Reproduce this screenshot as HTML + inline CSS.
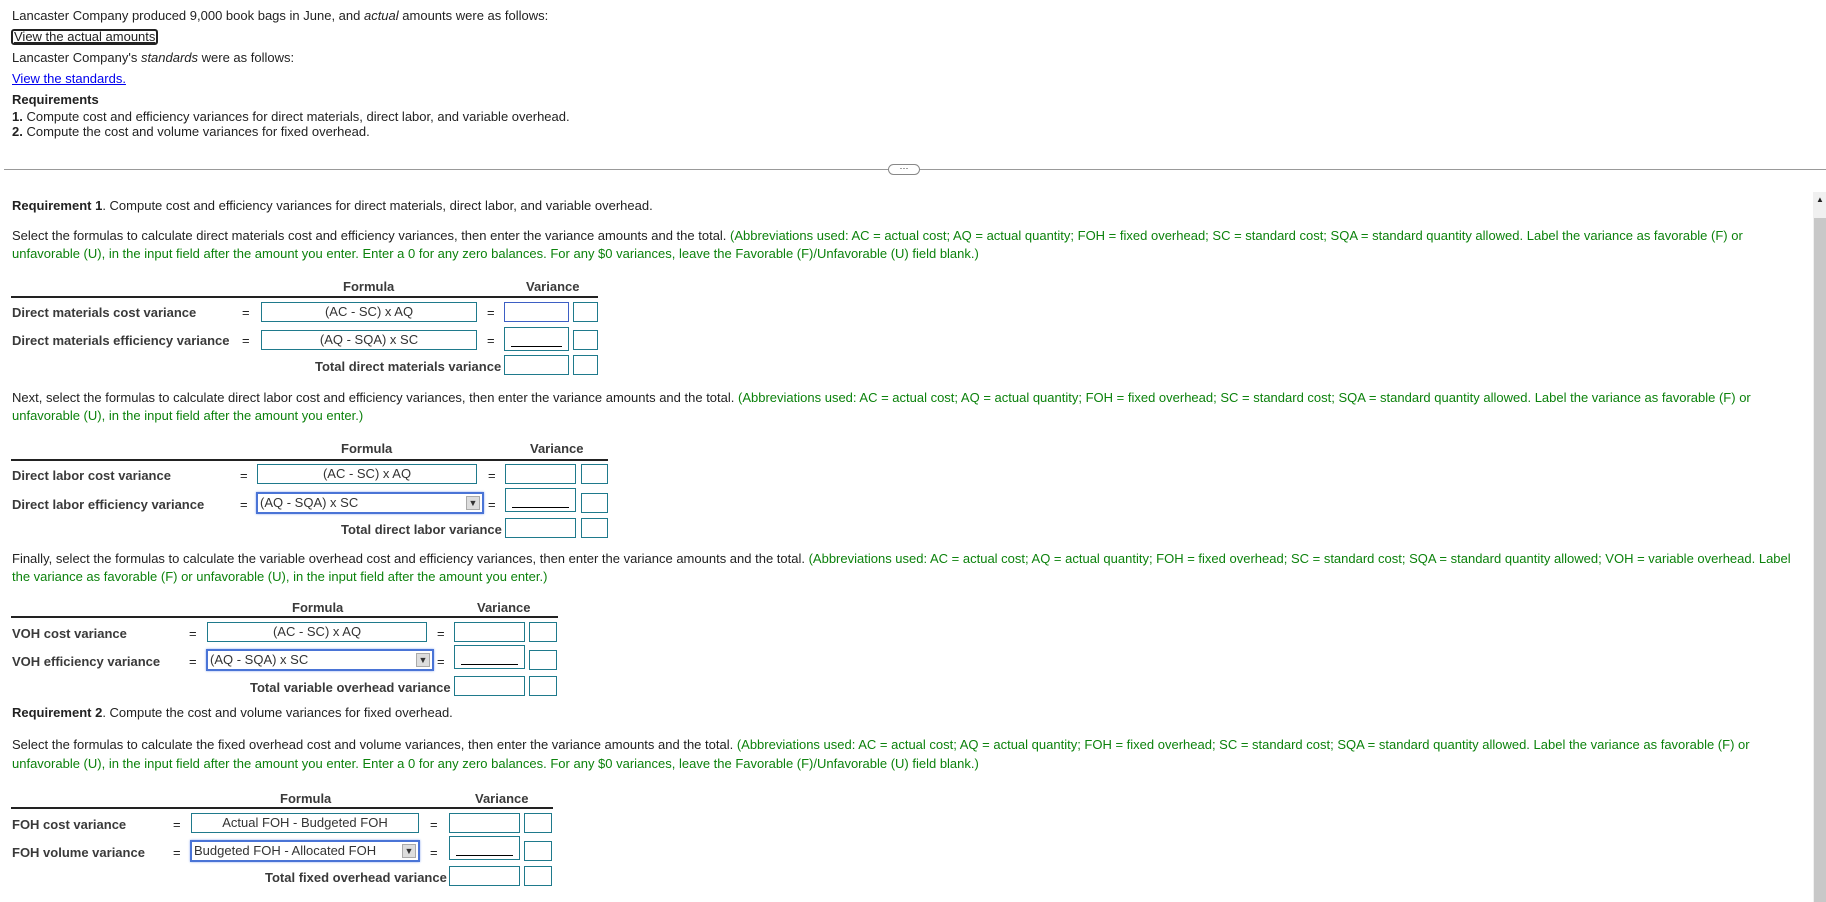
<!DOCTYPE html>
<html><head><meta charset="utf-8"><style>
*{margin:0;padding:0;box-sizing:border-box}
body{width:1826px;height:902px;overflow:hidden;background:#fff;font-family:"Liberation Sans",Arial,sans-serif;font-size:13px;color:#222;position:relative}
.a{position:absolute;white-space:nowrap;line-height:16px}
.g{color:#0c820c}
.lb{font-weight:bold;color:#3a3a3a}
.box{position:absolute;border:1px solid #1f7a8c;height:20px;background:#fff;text-align:center;line-height:18px;color:#333}
.sel{position:absolute;border:2px solid #4a74d6;height:22px;background:#fff;line-height:18px;color:#333;padding-left:2px;box-shadow:0 0 2px #8aa8ee}
.arr{position:absolute;right:2px;top:2px;width:14px;height:14px;background:#ddd;border:1px solid #aaa;font-size:9px;line-height:12px;text-align:center}
.ul{position:absolute;left:6px;right:6px;bottom:3px;border-bottom:1px solid #000}
.hl{position:absolute;height:2px;background:#222}
.h{font-weight:bold;color:#3a3a3a}
</style></head><body>
<div class="a" style="left:12px;top:8px">Lancaster Company produced 9,000 book bags in June, and <i>actual</i> amounts were as follows:</div>
<div class="a" style="left:11px;top:29px;border:2px solid #222;border-radius:3px;line-height:12px;padding:0 1px;text-decoration:underline">View the actual amounts</div>
<div class="a" style="left:12px;top:50px">Lancaster Company's <i>standards</i> were as follows:</div>
<div class="a" style="left:12px;top:71px;color:#00e;text-decoration:underline">View the standards.</div>
<div class="a" style="left:12px;top:92px;font-weight:bold">Requirements</div>
<div class="a" style="left:12px;top:109px"><b>1.</b> Compute cost and efficiency variances for direct materials, direct labor, and variable overhead.</div>
<div class="a" style="left:12px;top:124px"><b>2.</b> Compute the cost and volume variances for fixed overhead.</div>
<div style="position:absolute;left:4px;right:0;top:169px;height:1px;background:#999"></div>
<div style="position:absolute;left:888px;top:164px;width:32px;height:11px;border:1px solid #888;border-radius:6px;background:#fff;font-size:9px;line-height:6px;text-align:center">···</div>
<div style="position:absolute;left:1813px;top:192px;width:13px;height:710px;background:#f0f0f0"></div>
<div style="position:absolute;left:1814px;top:218px;width:12px;height:684px;background:#c8c8c8"></div>
<div class="a" style="left:1816px;top:196px;font-size:8px;line-height:8px">▲</div>

<div class="a" style="left:12px;top:198px"><b>Requirement 1</b>. Compute cost and efficiency variances for direct materials, direct labor, and variable overhead.</div>
<div class="a" style="left:12px;top:228px">Select the formulas to calculate direct materials cost and efficiency variances, then enter the variance amounts and the total. <span class="g">(Abbreviations used: AC = actual cost; AQ = actual quantity; FOH = fixed overhead; SC = standard cost; SQA = standard quantity allowed. Label the variance as favorable (F) or</span></div>
<div class="a g" style="left:12px;top:246px">unfavorable (U), in the input field after the amount you enter. Enter a 0 for any zero balances. For any $0 variances, leave the Favorable (F)/Unfavorable (U) field blank.)</div>

<!-- T1 -->
<div class="a h" style="left:343px;top:279px">Formula</div>
<div class="a h" style="left:526px;top:279px">Variance</div>
<div class="hl" style="left:11px;top:296px;width:587px"></div>
<div class="a lb" style="left:12px;top:305px">Direct materials cost variance</div>
<div class="a" style="left:242px;top:305px">=</div>
<div class="box" style="left:261px;top:302px;width:216px">(AC - SC) x AQ</div>
<div class="a" style="left:487px;top:305px">=</div>
<div class="box" style="left:504px;top:302px;width:65px;border-color:#3d5fc4"></div>
<div class="box" style="left:573px;top:302px;width:25px"></div>
<div class="a lb" style="left:12px;top:333px">Direct materials efficiency variance</div>
<div class="a" style="left:242px;top:333px">=</div>
<div class="box" style="left:261px;top:330px;width:216px">(AQ - SQA) x SC</div>
<div class="a" style="left:487px;top:333px">=</div>
<div class="box" style="left:504px;top:327px;width:65px;height:24px"><div class="ul"></div></div>
<div class="box" style="left:573px;top:330px;width:25px"></div>
<div class="a lb" style="left:315px;top:359px">Total direct materials variance</div>
<div class="box" style="left:504px;top:355px;width:65px"></div>
<div class="box" style="left:573px;top:355px;width:25px"></div>

<div class="a" style="left:12px;top:390px">Next, select the formulas to calculate direct labor cost and efficiency variances, then enter the variance amounts and the total. <span class="g">(Abbreviations used: AC = actual cost; AQ = actual quantity; FOH = fixed overhead; SC = standard cost; SQA = standard quantity allowed. Label the variance as favorable (F) or</span></div>
<div class="a g" style="left:12px;top:408px">unfavorable (U), in the input field after the amount you enter.)</div>

<!-- T2 -->
<div class="a h" style="left:341px;top:441px">Formula</div>
<div class="a h" style="left:530px;top:441px">Variance</div>
<div class="hl" style="left:11px;top:459px;width:597px"></div>
<div class="a lb" style="left:12px;top:468px">Direct labor cost variance</div>
<div class="a" style="left:240px;top:468px">=</div>
<div class="box" style="left:257px;top:464px;width:220px">(AC - SC) x AQ</div>
<div class="a" style="left:488px;top:468px">=</div>
<div class="box" style="left:505px;top:464px;width:71px"></div>
<div class="box" style="left:581px;top:464px;width:27px"></div>
<div class="a lb" style="left:12px;top:497px">Direct labor efficiency variance</div>
<div class="a" style="left:240px;top:497px">=</div>
<div class="sel" style="left:256px;top:492px;width:228px">(AQ - SQA) x SC<div class="arr">▼</div></div>
<div class="a" style="left:488px;top:497px">=</div>
<div class="box" style="left:505px;top:488px;width:71px;height:24px"><div class="ul"></div></div>
<div class="box" style="left:581px;top:493px;width:27px"></div>
<div class="a lb" style="left:341px;top:522px">Total direct labor variance</div>
<div class="box" style="left:505px;top:518px;width:71px"></div>
<div class="box" style="left:581px;top:518px;width:27px"></div>

<div class="a" style="left:12px;top:551px">Finally, select the formulas to calculate the variable overhead cost and efficiency variances, then enter the variance amounts and the total. <span class="g">(Abbreviations used: AC = actual cost; AQ = actual quantity; FOH = fixed overhead; SC = standard cost; SQA = standard quantity allowed; VOH = variable overhead. Label</span></div>
<div class="a g" style="left:12px;top:569px">the variance as favorable (F) or unfavorable (U), in the input field after the amount you enter.)</div>

<!-- T3 -->
<div class="a h" style="left:292px;top:600px">Formula</div>
<div class="a h" style="left:477px;top:600px">Variance</div>
<div class="hl" style="left:11px;top:616px;width:547px"></div>
<div class="a lb" style="left:12px;top:626px">VOH cost variance</div>
<div class="a" style="left:189px;top:626px">=</div>
<div class="box" style="left:207px;top:622px;width:220px">(AC - SC) x AQ</div>
<div class="a" style="left:437px;top:626px">=</div>
<div class="box" style="left:454px;top:622px;width:71px"></div>
<div class="box" style="left:529px;top:622px;width:28px"></div>
<div class="a lb" style="left:12px;top:654px">VOH efficiency variance</div>
<div class="a" style="left:189px;top:654px">=</div>
<div class="sel" style="left:206px;top:649px;width:228px">(AQ - SQA) x SC<div class="arr">▼</div></div>
<div class="a" style="left:437px;top:654px">=</div>
<div class="box" style="left:454px;top:645px;width:71px;height:24px"><div class="ul"></div></div>
<div class="box" style="left:529px;top:650px;width:28px"></div>
<div class="a lb" style="left:250px;top:680px">Total variable overhead variance</div>
<div class="box" style="left:454px;top:676px;width:71px"></div>
<div class="box" style="left:529px;top:676px;width:28px"></div>

<div class="a" style="left:12px;top:705px"><b>Requirement 2</b>. Compute the cost and volume variances for fixed overhead.</div>
<div class="a" style="left:12px;top:737px">Select the formulas to calculate the fixed overhead cost and volume variances, then enter the variance amounts and the total. <span class="g">(Abbreviations used: AC = actual cost; AQ = actual quantity; FOH = fixed overhead; SC = standard cost; SQA = standard quantity allowed. Label the variance as favorable (F) or</span></div>
<div class="a g" style="left:12px;top:756px">unfavorable (U), in the input field after the amount you enter. Enter a 0 for any zero balances. For any $0 variances, leave the Favorable (F)/Unfavorable (U) field blank.)</div>

<!-- T4 -->
<div class="a h" style="left:280px;top:791px">Formula</div>
<div class="a h" style="left:475px;top:791px">Variance</div>
<div class="hl" style="left:11px;top:807px;width:542px"></div>
<div class="a lb" style="left:12px;top:817px">FOH cost variance</div>
<div class="a" style="left:173px;top:817px">=</div>
<div class="box" style="left:191px;top:813px;width:228px">Actual FOH - Budgeted FOH</div>
<div class="a" style="left:430px;top:817px">=</div>
<div class="box" style="left:449px;top:813px;width:71px"></div>
<div class="box" style="left:524px;top:813px;width:28px"></div>
<div class="a lb" style="left:12px;top:845px">FOH volume variance</div>
<div class="a" style="left:173px;top:845px">=</div>
<div class="sel" style="left:190px;top:840px;width:230px">Budgeted FOH - Allocated FOH<div class="arr">▼</div></div>
<div class="a" style="left:430px;top:845px">=</div>
<div class="box" style="left:449px;top:836px;width:71px;height:24px"><div class="ul"></div></div>
<div class="box" style="left:524px;top:841px;width:28px"></div>
<div class="a lb" style="left:265px;top:870px">Total fixed overhead variance</div>
<div class="box" style="left:449px;top:866px;width:71px"></div>
<div class="box" style="left:524px;top:866px;width:28px"></div>
</body></html>
